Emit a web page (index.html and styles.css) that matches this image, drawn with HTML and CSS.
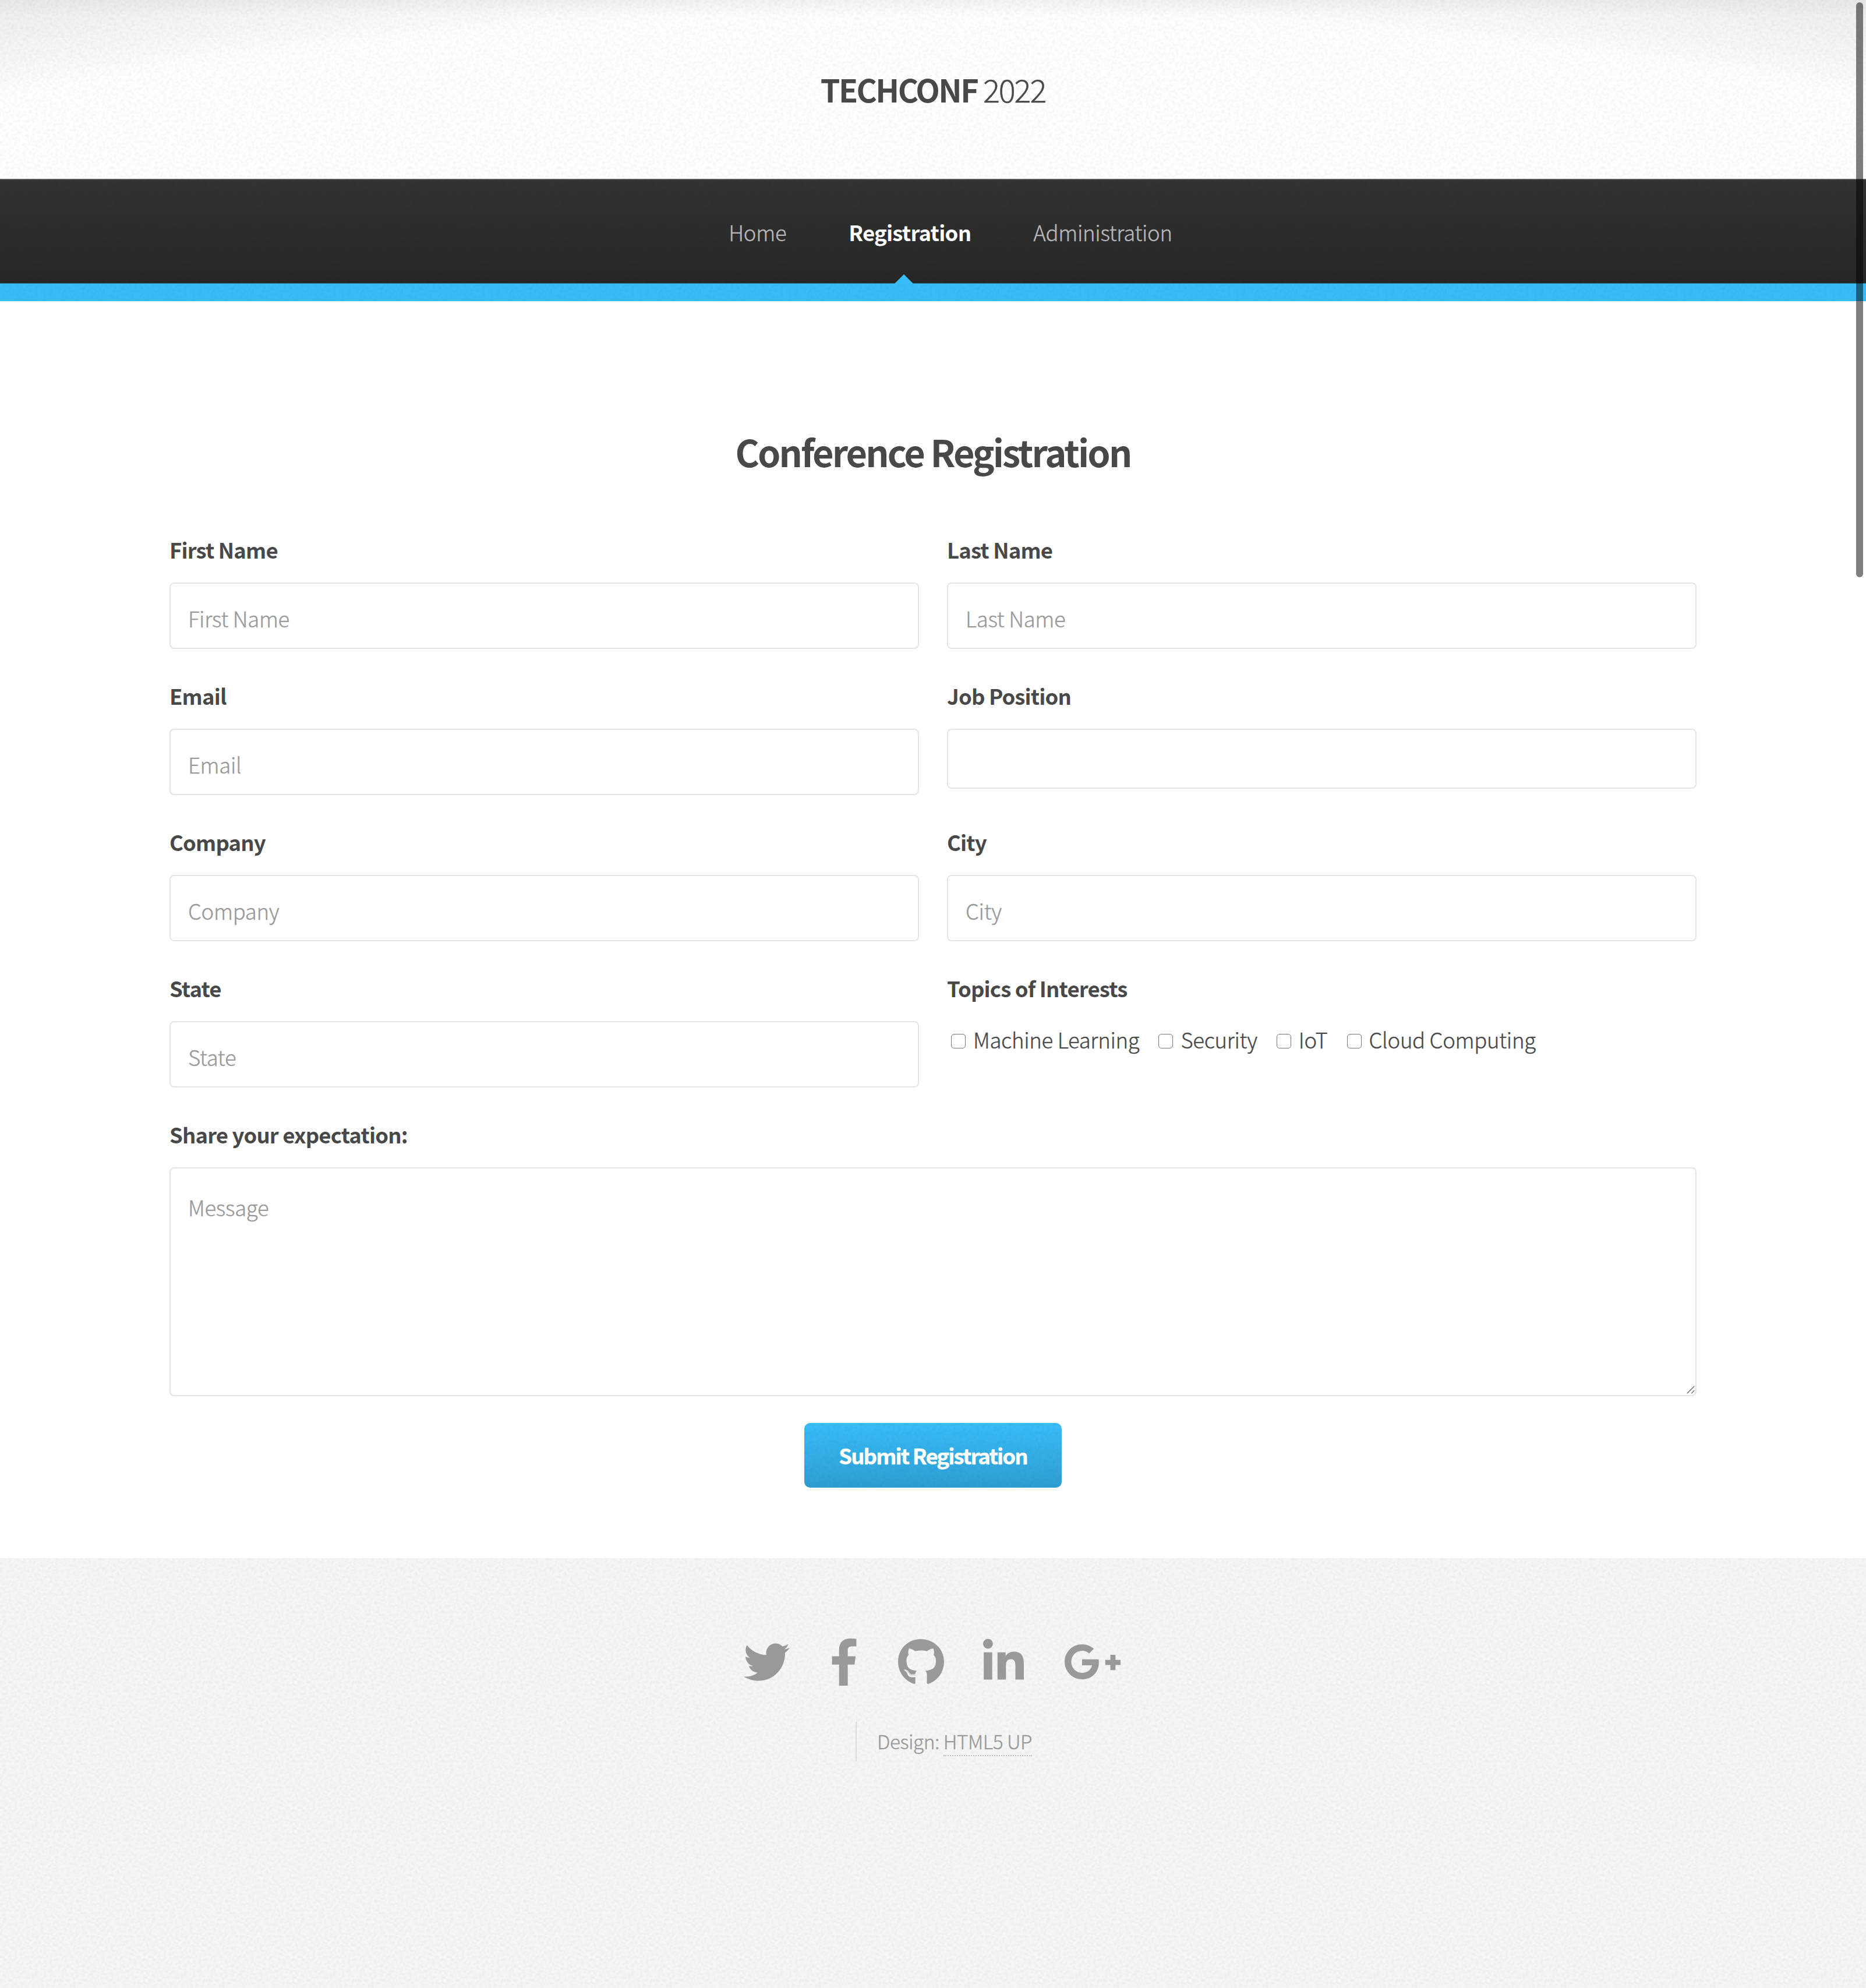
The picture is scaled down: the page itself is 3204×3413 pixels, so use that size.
FILE: index.html
```html
<!DOCTYPE html>
<html lang="en">
<head>
<meta charset="utf-8">
<title>TechConf 2022 - Registration</title>
<link rel="stylesheet" href="styles.css">
</head>
<body>
<header class="header"><h1 class="logo"><strong>TECHCONF</strong> <span class="year">2022</span></h1></header>
<nav class="nav">
  <a class="nav-link home">Home</a>
  <a class="nav-link active">Registration</a>
  <a class="nav-link admin">Administration</a>
</nav>
<main class="main">
  <h2 class="heading">Conference Registration</h2>
  <form class="form">
    <div class="field"><label>First Name</label><input class="control" placeholder="First Name"></div>
    <div class="field"><label>Last Name</label><input class="control" placeholder="Last Name"></div>
    <div class="field"><label>Email</label><input class="control" placeholder="Email"></div>
    <div class="field"><label>Job Position</label><div class="control select"></div></div>
    <div class="field"><label>Company</label><input class="control" placeholder="Company"></div>
    <div class="field"><label>City</label><input class="control" placeholder="City"></div>
    <div class="field"><label>State</label><input class="control" placeholder="State"></div>
    <div class="field"><label>Topics of Interests</label>
      <div class="topics">
        <div class="topic"><i class="box"></i><span>Machine Learning</span></div>
        <div class="topic"><i class="box"></i><span>Security</span></div>
        <div class="topic"><i class="box"></i><span>IoT</span></div>
        <div class="topic"><i class="box"></i><span>Cloud Computing</span></div>
      </div>
    </div>
    <div class="field wide"><label>Share your expectation:</label>
      <div class="area"><textarea class="control message" placeholder="Message"></textarea>
      <svg class="grip" viewBox="0 0 14 14"><path d="M.8 13.2 13.2.8M8.3 13.2l4.9-4.9"/></svg></div>
    </div>
  </form>
  <button class="submit">Submit Registration</button>
</main>
<footer class="footer">
  <div class="social">
    <svg class="twitter" viewBox="0 48 512 416"><path d="M459.37 151.716c.325 4.548.325 9.097.325 13.645 0 138.72-105.583 298.558-298.558 298.558-59.452 0-114.68-17.219-161.137-47.106 8.447.974 16.568 1.299 25.34 1.299 49.055 0 94.213-16.568 130.274-44.832-46.132-.975-84.792-31.188-98.112-72.772 6.498.974 12.995 1.624 19.818 1.624 9.421 0 18.843-1.3 27.614-3.573-48.081-9.747-84.143-51.98-84.143-102.985v-1.299c13.969 7.797 30.214 12.67 47.431 13.319-28.264-18.843-46.781-51.005-46.781-87.391 0-19.492 5.197-37.36 14.294-52.954 51.655 63.675 129.3 105.258 216.365 109.807-1.624-7.797-2.599-15.918-2.599-24.04 0-57.828 46.782-104.934 104.934-104.934 30.213 0 57.502 12.67 76.67 33.137 23.715-4.548 46.456-13.32 66.599-25.34-7.798 24.366-24.366 44.833-46.132 57.827 21.117-2.273 41.584-8.122 60.426-16.243-14.292 20.791-32.161 39.308-52.628 54.253z"/></svg>
    <svg class="facebook" viewBox="0 0 264 512"><path d="M76.7 512V283H0v-91h76.7v-71.7C76.7 42.4 124.3 0 193.8 0c33.3 0 61.9 2.5 70.2 3.6V85h-48.2c-37.8 0-45.1 18-45.1 44.3V192H256l-11.7 91h-73.6v229"/></svg>
    <svg class="github" viewBox="0 8 496 484"><path d="M165.9 397.4c0 2-2.3 3.6-5.2 3.6-3.3.3-5.6-1.3-5.6-3.6 0-2 2.3-3.6 5.2-3.6 3-.3 5.6 1.3 5.6 3.6zm-31.1-4.5c-.7 2 1.3 4.3 4.3 4.9 2.6 1 5.6 0 6.2-2s-1.3-4.3-4.3-5.2c-2.6-.7-5.5.3-6.2 2.3zm44.2-1.7c-2.9.7-4.9 2.6-4.6 4.9.3 2 2.9 3.3 5.9 2.6 2.9-.7 4.9-2.6 4.6-4.6-.3-1.9-3-3.2-5.9-2.9zM244.8 8C106.1 8 0 113.3 0 252c0 110.9 69.8 205.8 169.5 239.2 12.8 2.3 17.3-5.6 17.3-12.1 0-6.2-.3-40.4-.3-61.4 0 0-70 15-84.7-29.8 0 0-11.4-29.1-27.8-36.6 0 0-22.9-15.7 1.6-15.4 0 0 24.9 2 38.6 25.8 21.9 38.6 58.6 27.5 72.9 20.9 2.3-16 8.8-27.1 16-33.7-55.9-6.2-112.3-14.3-112.3-110.5 0-27.5 7.6-41.3 23.6-58.9-2.6-6.5-11.1-33.3 2.6-67.9 20.9-6.5 69 27 69 27 20-5.6 41.5-8.5 62.8-8.5s42.8 2.9 62.8 8.5c0 0 48.1-33.6 69-27 13.7 34.7 5.2 61.4 2.6 67.9 16 17.7 25.8 31.5 25.8 58.9 0 96.5-58.9 104.2-114.8 110.5 9.2 7.9 17 22.9 17 46.4 0 33.7-.3 75.4-.3 83.6 0 6.5 4.6 14.4 17.3 12.1C428.2 457.8 496 362.9 496 252 496 113.3 383.5 8 244.8 8zM97.2 352.9c-1.3 1-1 3.3.7 5.2 1.6 1.6 3.9 2.3 5.2 1 1.3-1 1-3.3-.7-5.2-1.6-1.6-3.9-2.3-5.2-1zm-10.8-8.1c-.7 1.3.3 2.9 2.3 3.9 1.6 1 3.6.7 4.3-.7.7-1.3-.3-2.9-2.3-3.9-2-.6-3.6-.3-4.3.7zm32.4 35.6c-1.6 1.3-1 4.3 1.3 6.2 2.3 2.3 5.2 2.6 6.5 1 1.3-1.3.7-4.3-1.3-6.2-2.2-2.3-5.2-2.6-6.5-1zm-11.4-14.7c-1.6 1-1.6 3.6 0 5.9 1.6 2.3 4.3 3.3 5.6 2.3 1.6-1.3 1.6-3.9 0-6.2-1.4-2.3-4-3.3-5.6-2z"/></svg>
    <svg class="linkedin" viewBox="0 32 448 448"><path d="M100.3 480H7.4V180.9h92.9V480zM53.8 140.1C24.1 140.1 0 115.5 0 85.8 0 56.1 24.1 32 53.8 32c29.7 0 53.8 24.1 53.8 53.8 0 29.7-24.1 54.3-53.8 54.3zM448 480h-92.7V334.4c0-34.7-.7-79.2-48.3-79.2-48.3 0-55.7 37.7-55.7 76.7V480h-92.8V180.9h89.1v40.8h1.3c12.4-23.5 42.7-48.3 87.9-48.3 94 0 111.3 61.9 111.3 142.3V480z"/></svg>
    <svg class="google" viewBox="12.8 64 614.4 384"><path d="M386.061 228.496c1.834 9.692 3.143 19.384 3.143 31.956C389.204 370.205 315.599 448 204.8 448c-106.084 0-192-85.915-192-192s85.916-192 192-192c51.864 0 95.083 18.859 128.611 50.292l-52.126 50.03c-14.145-13.621-39.028-29.599-76.485-29.599-65.484 0-118.92 54.221-118.92 121.277 0 67.056 53.436 121.277 118.92 121.277 75.961 0 104.513-54.745 108.965-82.773H204.8v-66.009h181.261zm185.406 6.437V179.2h-56.001v55.733h-55.733v56.001h55.733v55.733h56.001v-55.733H627.2v-56.001h-55.733z"/></svg>
  </div>
  <p class="credit"><span>Design:</span> <a class="credit-link">HTML5 UP</a></p>
</footer>
<div class="scrollbar"></div>
</body>
</html>
```
FILE: styles.css
```css
* { box-sizing: border-box; }
body {
  margin: 0;
  height: 3413px;
  overflow: hidden;
  position: relative;
  display: flex;
  flex-direction: column;
  background: #fff;
  color: #484848;
  font-family: "Noto Sans CJK SC", "Noto Sans", sans-serif;
  font-size: 36.5px;
  font-weight: 300;
  letter-spacing: -.3px;
  -webkit-text-stroke: .4px;
  --grain: url("data:image/svg+xml,%3Csvg xmlns='http://www.w3.org/2000/svg' width='256' height='256'%3E%3Cfilter id='n' x='0' y='0' width='100%25' height='100%25'%3E%3CfeTurbulence type='fractalNoise' baseFrequency='.2' numOctaves='3' stitchTiles='stitch'/%3E%3CfeColorMatrix values='0 0 0 0 0 0 0 0 0 0 0 0 0 0 0 .08 0 0 0 -.03'/%3E%3C/filter%3E%3Crect width='256' height='256' filter='url(%23n)'/%3E%3C/svg%3E");
}
.header {
  height: 307px;
  background:
    var(--grain),
    linear-gradient(rgba(0, 0, 0, .03), transparent 26px),
    radial-gradient(3000px 920px at 50% 950px, #fff 100%, #f8f8f8 105%, #f0f0f0 113%, #eee 118%);
}
.logo {
  margin: 0;
  text-align: center;
  font-size: 54px;
  font-weight: 300;
  line-height: 306px;
  letter-spacing: -2.1px;
}
.logo strong {
  font-weight: 700;
  letter-spacing: -2.6px;
  -webkit-text-stroke: 0;
}
.nav {
  height: 210px;
  padding-left: 60px;
  display: flex;
  justify-content: center;
  gap: 107px;
  line-height: 184px;
  color: #b9b9b9;
  background: var(--grain), linear-gradient(#696969 1px, #333 2px, #262626 179px, #38bdf8 180px);
}
.active {
  position: relative;
  color: #fff;
  font-weight: 700;
  letter-spacing: -.75px;
  -webkit-text-stroke: 0;
}
.active::after {
  content: "";
  position: absolute;
  left: 78px;
  top: 164px;
  border: solid transparent;
  border-width: 0 17px 17px;
  border-bottom-color: #38bdf8;
}
.main { height: 2158px; padding: 208px 291px 0; }
.heading {
  margin: 0 0 88px;
  text-align: center;
  font-size: 63px;
  line-height: 100px;
  font-weight: 700;
  letter-spacing: -2.85px;
  -webkit-text-stroke: 0;
}
.form { display: grid; grid-template-columns: 1fr 1fr; column-gap: 48px; }
.field { height: 251px; }
.field label {
  display: block;
  height: 87px;
  line-height: 61px;
  font-weight: 700;
  letter-spacing: -.85px;
  -webkit-text-stroke: 0;
}
.control {
  display: block;
  width: 100%;
  height: 114px;
  padding: 8px 30px 0;
  border: 2px solid #e5e5e5;
  border-radius: 8px;
  background: #fff;
  font: inherit;
  color: inherit;
  letter-spacing: inherit;
  outline: 0;
}
.control::placeholder { color: #999; opacity: 1; }
.select { height: 103px; }
.topics { display: flex; gap: 33px; padding-left: 7px; line-height: 63px; }
.topic { display: flex; gap: 13px; }
.box { width: 25px; height: 25px; margin-top: 22px; border: 1.5px solid #767676; border-radius: 5px; }
.wide { grid-column: 1 / -1; height: 479px; }
.area { position: relative; }
.message { height: 393px; padding-top: 36px; line-height: 61px; resize: none; }
.grip { position: absolute; right: 3px; bottom: 4px; width: 14px; height: 14px; fill: none; stroke: #777; stroke-width: 1.6; }
.submit {
  display: block;
  width: 442px;
  height: 111px;
  margin: 47px auto 0;
  padding: 0;
  border: 0;
  border-radius: 10px;
  background: var(--grain), linear-gradient(#38bdfa, #2e9ed2);
  color: #fff;
  font: inherit;
  font-weight: 700;
  line-height: 104px;
  letter-spacing: -1.85px;
}
.footer { flex: 1; padding-top: 138px; background: var(--grain), #f6f6f6; color: #999; }
.social { display: flex; justify-content: center; height: 143px; padding-right: 3px; fill: #999; }
.twitter { width: 79px; height: 65px; margin: 8px 72px 0 0; }
.facebook { width: 43px; height: 81px; margin-right: 71px; }
.github { width: 79px; height: 77px; margin: 1px 67px 0 0; }
.linkedin { width: 70px; height: 71px; margin-right: 70px; }
.google { width: 96px; height: 60px; margin-top: 10px; }
.credit {
  width: 302px;
  height: 68px;
  margin: 0 auto 0 1469px;
  padding-left: 35px;
  border-left: 2px solid #dcdcdc;
  font-size: 33.3px;
  line-height: 65px;
  letter-spacing: -.45px;
  white-space: nowrap;
}
.credit-link { border-bottom: 2px dotted #bfbfbf; }
.scrollbar {
  position: absolute;
  left: 3187px;
  top: 4px;
  width: 12px;
  height: 987px;
  border-radius: 6px;
  background: rgba(0, 0, 0, .5);
}
```
